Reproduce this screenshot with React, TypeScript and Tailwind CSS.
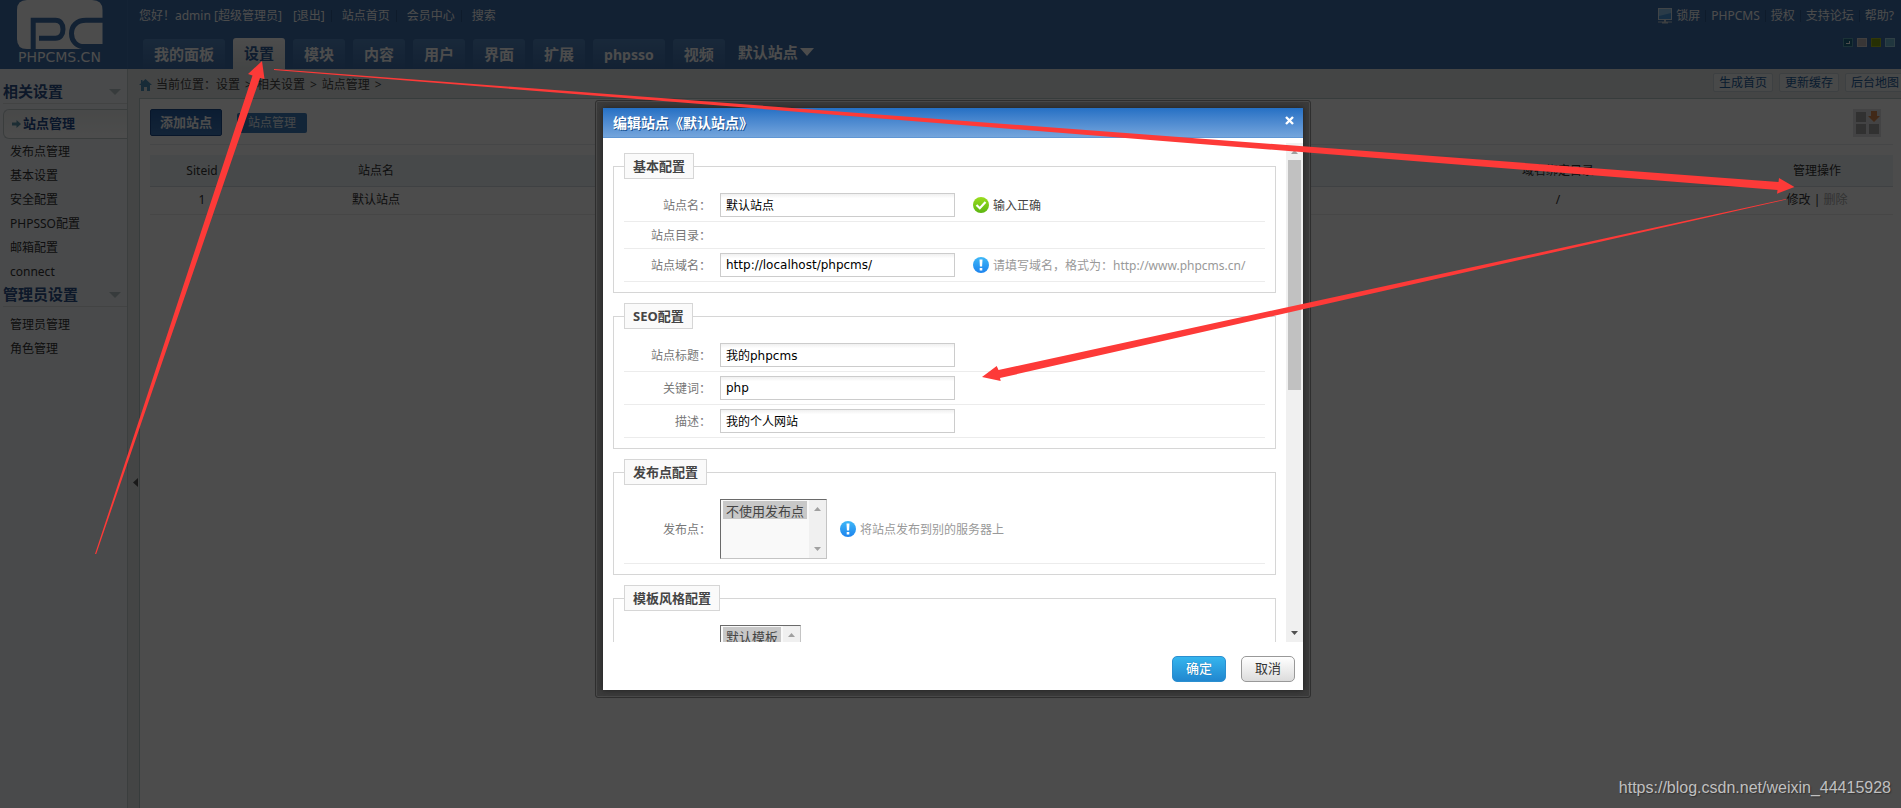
import React from 'react';

const tabs = ['我的面板', '设置', '模块', '内容', '用户', '界面', '扩展', 'phpsso', '视频'];
const siteLinks = ['站点首页', '会员中心', '搜索'];
const settingItems = ['发布点管理', '基本设置', '安全配置', 'PHPSSO配置', '邮箱配置', 'connect'];
const adminItems = ['管理员管理', '角色管理'];

function Logo() {
  return (
    <div className="flex w-32 shrink-0 flex-col border-r border-[#4577b2] pl-[17px]">
      <svg width="86" height="49" viewBox="17 0 86 49" aria-hidden="true">
        <path d="M27 0H92Q102.500 0 102.500 10V49H27Q17 49 17 39V10Q17 0 27 0Z" fill="#fff" />
        <path
          d="M33.200 49V20.300H55.500C60 20.300 63 23.500 63 29.300C63 35 60 38.300 55.500 38.300H39"
          fill="none"
          stroke="#3c6eaa"
          strokeWidth="5"
        />
        <path
          d="M103 20.300H86C76.500 20.300 71.500 26 71.500 33.500C71.500 41 76.500 46.600 84 46.600H103"
          fill="none"
          stroke="#3c6eaa"
          strokeWidth="5"
        />
      </svg>
      <span className="pl-px font-['DejaVu_Sans'] text-[14px] leading-4 text-white">PHPCMS.CN</span>
    </div>
  );
}

function Separator() {
  return <span className="h-3 w-px bg-[#2f5b90]" />;
}

function Header() {
  return (
    <header className="flex h-[69px] bg-[#3c6eaa] text-[12px] text-white">
      <Logo />
      <div className="flex min-w-0 grow flex-col justify-between pl-[11px]">
        <div className="flex h-[30px] items-center justify-between pt-px pr-[7px]">
          <div className="flex items-center">
            <span>您好！admin [超级管理员]</span>
            <a href="#logout" className="mr-1.5 ml-[11px]">[退出]</a>
            {siteLinks.map((l) => (
              <React.Fragment key={l}>
                <Separator />
                <a href="#link" className="mr-1.5 ml-2.5">{l}</a>
              </React.Fragment>
            ))}
          </div>
          <div className="flex items-center gap-[5px]">
            <a href="#lock" className="flex items-center gap-1">
              <svg width="14" height="16" viewBox="0 0 14 16" aria-hidden="true">
                <rect x="0.500" y="0.500" width="13" height="11" fill="#4a9be0" stroke="#d5e3ee" />
                <path d="M1 1h12v4L1 8z" fill="#8cc6f2" />
                <path d="M6 12h2v2H6zM0 13.500h14v1H0zM4 14h6v1.500H4z" fill="#c9d3da" />
              </svg>
              锁屏
            </a>
            <Separator />
            <a href="#phpcms">PHPCMS</a>
            <Separator />
            <a href="#license">授权</a>
            <Separator />
            <a href="#forum">支持论坛</a>
            <Separator />
            <a href="#help">帮助?</a>
          </div>
        </div>
        <div className="flex items-start justify-between pr-1.5">
          <nav className="flex h-[31px] items-end gap-2 pl-1 text-[15px] font-bold">
            {tabs.map((t) => (
              <a
                key={t}
                href="#tab"
                className={
                  t === '设置'
                    ? 'flex h-[31px] items-center rounded-t-[3px] bg-linear-to-b from-white to-[#e2e7e6] px-[11px] text-[#30609c]'
                    : t === 'phpsso'
                      ? 'flex h-[30px] items-center rounded-t-[3px] bg-linear-to-b from-[#5488c2] to-[#3f70ac] px-[11px] text-[14px]'
                      : 'flex h-[30px] items-center rounded-t-[3px] bg-linear-to-b from-[#5488c2] to-[#3f70ac] px-[11px]'
                }
              >
                {t}
              </a>
            ))}
            <button className="mb-[5px] ml-[5px] flex h-6 items-center gap-0.5 font-bold">
              默认站点
              <svg width="14" height="8" viewBox="0 0 14 8" aria-hidden="true">
                <path d="M0 0H14L7 8Z" fill="#fff" />
              </svg>
            </button>
          </nav>
          <div className="flex gap-1">
            <button aria-label="深蓝" className="flex h-[9px] w-2.5 items-center justify-center border border-[#5ba3b5] bg-[#1f6a86]">
              <span className="h-[3px] w-1 border-r border-b border-white" />
            </button>
            <button aria-label="灰色" className="h-[9px] w-2.5 border border-[#d8d4d4] bg-[#bdb5b5]" />
            <button aria-label="绿色" className="h-[9px] w-2.5 border border-[#a9bd20] bg-[#7fa010]" />
            <button aria-label="浅蓝" className="h-[9px] w-2.5 border border-[#9fd4e4] bg-[#6db4cf]" />
          </div>
        </div>
      </div>
    </header>
  );
}

function SideHeading({ children }: { children: string }) {
  return (
    <h3 className="ml-[3px] flex h-6 items-center justify-between border-b border-[#dcdfe0] pr-1.5 text-[15px] font-bold text-[#2c5189]">
      {children}
      <svg width="12" height="6" viewBox="0 0 12 6" aria-hidden="true">
        <path d="M0 0H12L6 6Z" fill="#b9c6c8" />
      </svg>
    </h3>
  );
}

function SideItem({ children }: { children: string }) {
  return (
    <li className="flex h-6 items-center pt-0.5 pl-2.5">
      <a href="#item">{children}</a>
    </li>
  );
}

function Sidebar() {
  return (
    <aside className="w-32 shrink-0 border-r border-[#c6cfd0] bg-[#f3f8fc] pt-[11px] text-[12px] text-[#333]">
      <SideHeading>相关设置</SideHeading>
      <ul className="pt-[5px]">
        <li className="ml-[3px] flex h-[30px] items-center gap-0.5 rounded-l-[6px] border-y border-l border-[#c3cdce] bg-linear-to-b from-[#f0f4f3] to-white pl-2">
          <svg width="9" height="8" viewBox="0 0 9 8" aria-hidden="true">
            <path d="M0 2.500H4.500V0L9 4L4.500 8V5.500H0Z" fill="#5e97ad" />
          </svg>
          <a href="#item" className="text-[13px] font-bold text-[#1f4a8c]">站点管理</a>
        </li>
        {settingItems.map((i) => (
          <SideItem key={i}>{i}</SideItem>
        ))}
      </ul>
      <SideHeading>管理员设置</SideHeading>
      <ul className="pt-[5px]">
        {adminItems.map((i) => (
          <SideItem key={i}>{i}</SideItem>
        ))}
      </ul>
    </aside>
  );
}

function ToolLink({ children }: { children: string }) {
  return (
    <a href="#tool" className="flex h-[19px] shrink-0 items-center rounded-[2px] border border-[#cdd6dc] bg-[#f0f3f4] px-[5px] text-[#1f5f9e]">
      {children}
    </a>
  );
}

function Workspace() {
  return (
    <div className="flex min-w-0 grow flex-col">
      <div className="flex h-[29px] items-center justify-between text-[12px] text-[#444]">
        <div className="flex items-center gap-1 pt-0.5">
          <svg width="13" height="12" viewBox="0 0 13 12" aria-hidden="true">
            <path d="M6.500 0L13 6H11V12H8V8H5V12H2V6H0L2 4.200V1H3.500V2.800Z" fill="#4f8fb8" />
          </svg>
          <span className="flex gap-[5px]">
            <span>当前位置：设置</span>
            <span>&gt;</span>
            <span>相关设置</span>
            <span>&gt;</span>
            <span>站点管理</span>
            <span>&gt;</span>
          </span>
        </div>
        <div className="-mr-1 flex h-full items-start gap-1.5 pt-1">
          <ToolLink>生成首页</ToolLink>
          <ToolLink>更新缓存</ToolLink>
          <ToolLink>后台地图</ToolLink>
        </div>
      </div>
      <main className="grow border-t border-l border-[#b9c9c8] bg-white pt-2.5 pr-2 pl-2.5 text-[12px] text-[#333]">
        <div className="flex items-start justify-between border-b border-[#e8ecee] pr-3 pb-[7px]">
          <div className="flex items-center gap-[15px]">
            <button className="h-[27px] rounded-[2px] border border-[#1d4c8c] bg-linear-to-b from-[#2660a8] to-[#3f78b8] px-[9px] text-[13px] font-bold text-white">
              添加站点
            </button>
            <a href="#sites" className="flex h-5 items-center rounded-[2px] bg-[#3f7ebc] px-[11px] text-[#e6eef6]">
              站点管理
            </a>
          </div>
          <button aria-label="快捷方式">
            <svg width="28" height="28" viewBox="0 0 28 28">
              <rect width="28" height="28" fill="#e0e2e4" />
              <path d="M3 3h10v10H3zM3 15h10v10H3zM16 15h10v10H16z" fill="#a3a3a3" />
              <path d="M18 2h6v5h3l-6 6-6-6h3z" fill="#d98b50" />
            </svg>
          </button>
        </div>
        <table className="mt-2.5 w-full table-fixed border-collapse text-center">
          <colgroup>
            <col className="w-[104px]" />
            <col className="w-[14%]" />
            <col />
            <col className="w-[21%]" />
            <col className="w-[152px]" />
          </colgroup>
          <thead>
            <tr className="h-[31px] border-b border-[#d3dbe0] bg-[#eef3f7]">
              <th className="pt-0.5 font-normal">Siteid</th>
              <th className="pt-0.5 font-normal">站点名</th>
              <th />
              <th className="pt-0.5 font-normal">域名绑定目录</th>
              <th className="pt-0.5 font-normal">管理操作</th>
            </tr>
          </thead>
          <tbody>
            <tr className="h-7 border-b border-[#ececec]">
              <td>1</td>
              <td>默认站点</td>
              <td />
              <td>/</td>
              <td>
                <a href="#edit">修改</a> | <span className="text-[#aaa]">删除</span>
              </td>
            </tr>
          </tbody>
        </table>
      </main>
    </div>
  );
}

function InfoIcon() {
  return (
    <svg width="16" height="16" viewBox="0 0 16 16" aria-hidden="true">
      <defs>
        <linearGradient id="info" x1="0" y1="0" x2="0" y2="1">
          <stop offset="0" stopColor="#3fb8f7" />
          <stop offset="1" stopColor="#1c83ee" />
        </linearGradient>
      </defs>
      <circle cx="8" cy="8" r="8" fill="url(#info)" />
      <path d="M6.500 2.500h3l-.4 7h-2.200zM6.700 11h2.600v2.500H6.700z" fill="#fff" />
    </svg>
  );
}

function OkIcon() {
  return (
    <svg width="16" height="16" viewBox="0 0 16 16" aria-hidden="true">
      <defs>
        <linearGradient id="ok" x1="0" y1="0" x2="0" y2="1">
          <stop offset="0" stopColor="#9add1e" />
          <stop offset="1" stopColor="#5cb512" />
        </linearGradient>
      </defs>
      <circle cx="8" cy="8" r="8" fill="url(#ok)" />
      <path d="M3.500 8L6.800 11.200L12.500 5" fill="none" stroke="#fff" strokeWidth="2.200" />
    </svg>
  );
}

function Section({ title, children }: { title: string; children: React.ReactNode }) {
  return (
    <fieldset className="mt-2.5 border border-[#d6d6d6] p-2.5">
      <legend className="h-[26px] border border-[#d6d6d6] bg-[#fafafa] px-2 text-[13px] leading-6 font-bold text-[#444]">
        {title}
      </legend>
      {children}
    </fieldset>
  );
}

function Row({ id, label, children }: { id?: string; label?: string; children?: React.ReactNode }) {
  const Tag = id ? 'label' : 'span';
  return (
    <div className="flex items-center border-b border-[#ececec] py-1">
      <Tag htmlFor={id} className="mr-[9px] w-[87px] shrink-0 pt-0.5 text-right leading-4 text-[#777]">
        {label && `${label}：`}
      </Tag>
      {children}
    </div>
  );
}

function Hint({ icon, className, children }: { icon: React.ReactNode; className: string; children: string }) {
  return (
    <span className={className}>
      {icon}
      <span className="pt-0.5 leading-4">{children}</span>
    </span>
  );
}

function TextField({ id, value }: { id: string; value: string }) {
  return (
    <input
      id={id}
      defaultValue={value}
      className="h-6 w-[235px] border border-[#ccc] bg-white bg-linear-to-b from-[#f0f0f0] to-white to-20% px-[5px] pb-px font-['DejaVu_Sans','Noto_Sans_CJK_SC',sans-serif] text-[12px] text-black outline-none"
    />
  );
}

function ListBox({ id, name, option }: { id: string; name: string; option: string }) {
  return (
    <div className="flex h-[60px] border border-t-[#6a6a6a] border-r-[#c4c4c4] border-b-[#c4c4c4] border-l-[#6a6a6a] bg-[#f9f9f9]">
      <select
        id={id}
        aria-label={name}
        size={3}
        defaultValue={option}
        className="appearance-none overflow-hidden bg-[#f9f9f9] px-0.5 pt-px text-[13px] outline-none"
      >
        <option className="h-[18px] bg-[#c8c8c8] px-[3px] py-0 leading-[18px] text-[#444] checked:bg-[#c8c8c8]">{option}</option>
      </select>
      <div className="flex w-[17px] flex-col items-center justify-between bg-[#f0f0f0] py-[7px]">
        <svg width="7" height="4" viewBox="0 0 7 4" aria-hidden="true">
          <path d="M0 4H7L3.500 0Z" fill="#a0a0a0" />
        </svg>
        <svg width="7" height="4" viewBox="0 0 7 4" aria-hidden="true">
          <path d="M0 0H7L3.500 4Z" fill="#a0a0a0" />
        </svg>
      </div>
    </div>
  );
}

function EditDialog() {
  return (
    <div className="w-[716px] rounded-[3px] border border-[#2f2f2f] bg-[#3b3b3b] p-[7px] shadow-[inset_0_0_0_1px_#4a4a4a]">
      <section role="dialog" aria-label="编辑站点" className="bg-white text-[12px] shadow-[0_0_6px_#1f1f1f]">
        <div className="flex h-[30px] items-center justify-between border-b border-[#5f96d4] bg-linear-to-b from-[#2470c4] to-[#74a5dc] pr-[9px] pl-2.5 text-white">
          <h2 className="text-[14px] font-bold text-shadow-[1px_1px_0_#1b5291]">编辑站点《默认站点》</h2>
          <button aria-label="关闭" className="mb-1">
            <svg width="9" height="9" viewBox="0 0 9 9">
              <path d="M1 1L8 8M8 1L1 8" stroke="#fff" strokeWidth="2.400" />
            </svg>
          </button>
        </div>
        <div className="mt-[5px] flex h-[499px]">
          <form className="h-full grow overflow-hidden px-2.5">
            <Section title="基本配置">
              <Row id="name" label="站点名">
                <TextField id="name" value="默认站点" />
                <Hint icon={<OkIcon />} className="ml-[18px] flex items-center gap-1 text-[#444]">
                  输入正确
                </Hint>
              </Row>
              <Row label="站点目录" />
              <Row id="domain" label="站点域名">
                <TextField id="domain" value="http://localhost/phpcms/" />
                <Hint icon={<InfoIcon />} className="ml-[18px] flex items-center gap-1 text-[#999]">
                  请填写域名，格式为：http://www.phpcms.cn/
                </Hint>
              </Row>
            </Section>
            <Section title="SEO配置">
              <Row id="title" label="站点标题">
                <TextField id="title" value="我的phpcms" />
              </Row>
              <Row id="keywords" label="关键词">
                <TextField id="keywords" value="php" />
              </Row>
              <Row id="desc" label="描述">
                <TextField id="desc" value="我的个人网站" />
              </Row>
            </Section>
            <Section title="发布点配置">
              <Row id="release" label="发布点">
                <ListBox id="release" name="发布点" option="不使用发布点" />
                <Hint icon={<InfoIcon />} className="ml-[13px] flex items-center gap-1 text-[#999]">
                  将站点发布到别的服务器上
                </Hint>
              </Row>
            </Section>
            <Section title="模板风格配置">
              <Row>
                <ListBox id="template" name="模板风格" option="默认模板" />
              </Row>
            </Section>
          </form>
          <div className="flex w-[17px] shrink-0 flex-col items-center bg-[#f0f0f0] py-[7px]">
            <svg width="7" height="4" viewBox="0 0 7 4" aria-hidden="true">
              <path d="M0 4H7L3.500 0Z" fill="#a0a0a0" />
            </svg>
            <div className="mt-1.5 mb-auto h-[230px] w-[13px] bg-[#c1c1c1]" />
            <svg width="7" height="4" viewBox="0 0 7 4" aria-hidden="true">
              <path d="M0 0H7L3.500 4Z" fill="#505050" />
            </svg>
          </div>
        </div>
        <div className="flex h-12 items-center justify-end gap-[15px] pt-1.5 pr-2">
          <button className="h-[26px] w-[54px] rounded-[5px] border border-[#2b8fd0] bg-linear-to-b from-[#35b5ee] to-[#2187cf] text-[13px] font-medium text-white text-shadow-[0_0_1px_#0d5f9e]">
            确定
          </button>
          <button className="h-[26px] w-[54px] rounded-[5px] border border-[#999] bg-linear-to-b from-white to-[#dcdcdc] text-[13px] text-[#333]">
            取消
          </button>
        </div>
      </section>
    </div>
  );
}

export default function App() {
  return (
    <div className="relative flex min-h-screen flex-col overflow-hidden bg-[#e3e8e6] font-['Noto_Sans','Noto_Sans_CJK_SC',sans-serif]">
      <Header />
      <div className="flex grow">
        <Sidebar />
        <div className="flex w-[11px] shrink-0 items-center justify-end pt-[88px]">
          <button aria-label="收起">
            <svg width="6" height="9" viewBox="0 0 6 9">
              <path d="M5 0V9L0 4.500Z" fill="#555" />
            </svg>
          </button>
        </div>
        <Workspace />
      </div>
      <div className="absolute inset-0 flex items-start justify-center bg-black/70 pt-[100px] pl-[5px]">
        <EditDialog />
      </div>
      <svg className="pointer-events-none absolute inset-0 h-full w-full" aria-hidden="true">
        <g fill="#fd3a38">
          <path d="M95 554L252.500 75.500L248 74L262 61L264.500 79L260 78L96.200 554Z" />
          <path d="M274 69L1778.500 182L1779 178L1794.500 187L1777 193.700L1777.500 190L274 70Z" />
          <path d="M1786 199L998.500 370L996.700 366L982 377L1000.700 381L1000 378L1786 199.600Z" />
        </g>
      </svg>
      <p className="absolute right-2.5 bottom-2 font-['Liberation_Sans'] text-[16px] text-[#c0c0c0] text-shadow-[1px_1px_1px_#333]">
        https://blog.csdn.net/weixin_44415928
      </p>
    </div>
  );
}
